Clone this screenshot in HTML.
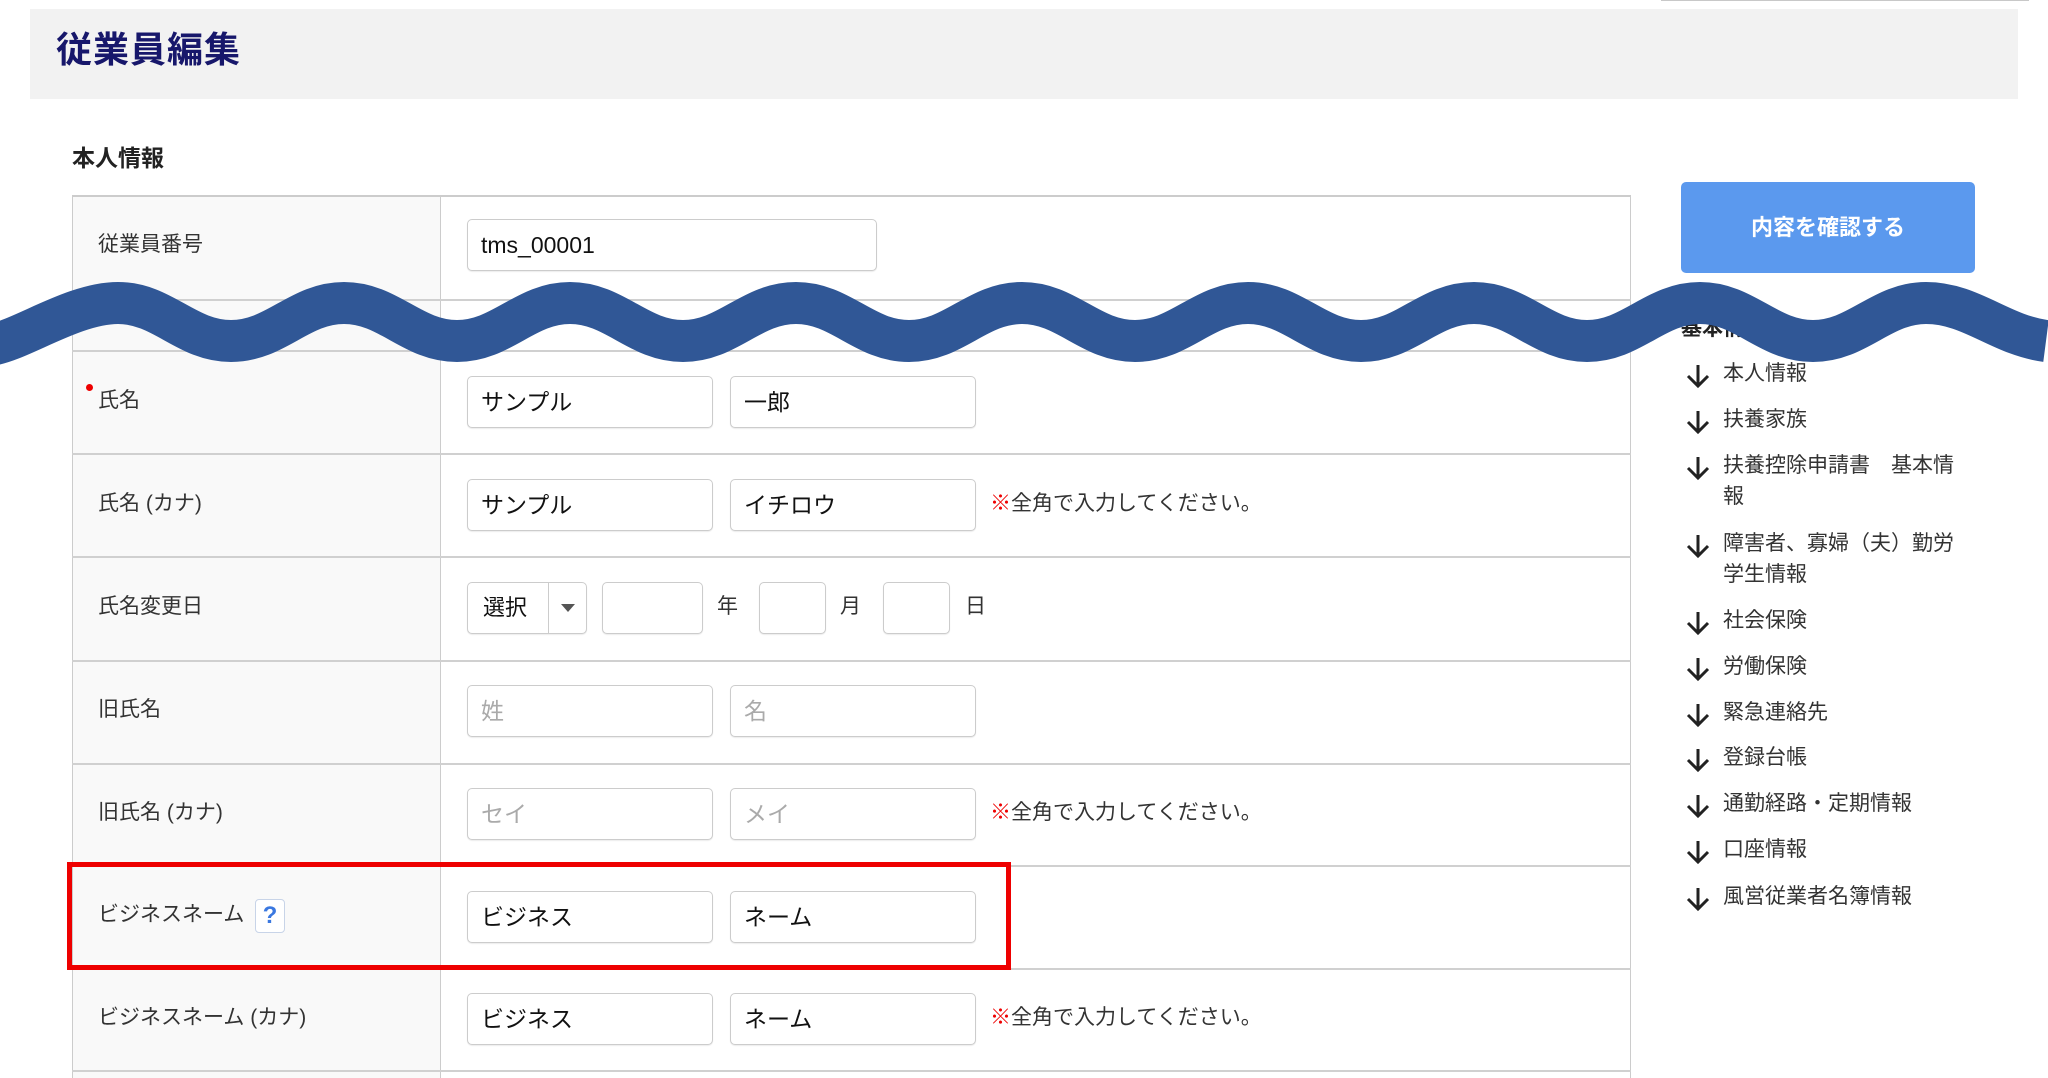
<!DOCTYPE html>
<html><head><meta charset="utf-8"><style>
*{margin:0;padding:0;box-sizing:border-box}
body{width:2048px;height:1078px;overflow:hidden;background:#fff;position:relative;font-family:"Liberation Sans","Noto Sans CJK JP",sans-serif;color:#333}
.a{position:absolute}
.hdr{left:30px;top:9px;width:1988px;height:90px;background:#f2f2f2}
.title{left:56px;top:26px;font-size:36px;font-weight:bold;color:#17176b;line-height:48px;letter-spacing:1px}
.sec{left:72px;top:143px;font-size:23px;font-weight:bold;color:#222;line-height:30px}
.tbl{left:72px;top:195px;width:1559px;height:883px;border-left:1px solid #ccc;border-right:1px solid #ccc;border-top:2px solid #ccc}
.lbl{left:73px;width:368px;background:#f9f9f9;border-right:1px solid #ccc}
.hl{left:72px;width:1559px;height:0;border-top:2px solid #d0d0d0}
.lt{left:98px;font-size:21px;color:#333;line-height:30px}
.in{height:52px;border:1px solid #ccc;border-radius:5px;background:#fff;font-size:23px;color:#111;line-height:50px;padding-left:13px;box-shadow:0 1px 1px rgba(0,0,0,.08)}
.ph{color:#aaa}
.note{font-size:21px;color:#333;line-height:30px}
.note b{color:#e00;font-weight:normal}
.btn{left:1681px;top:182px;width:294px;height:91px;background:#5b99ee;border-radius:5px;color:#fff;font-size:22px;font-weight:bold;text-align:center;line-height:91px}
.nav{left:1697px;font-size:21px;color:#333;line-height:31px}
.nav svg{position:absolute;left:-12px;top:5px}
.nav span{display:block;margin-left:26px;width:240px}
</style></head><body>
<div class="a" style="left:1661px;top:0;width:368px;height:1px;background:#c8c8c8"></div>
<div class="a hdr"></div>
<div class="a title">従業員編集</div>
<div class="a sec">本人情報</div>

<div class="a tbl"></div>
<div class="a lbl" style="top:197px;height:881px"></div>
<div class="a hl" style="top:299px"></div>
<div class="a hl" style="top:350px"></div>
<div class="a hl" style="top:453px"></div>
<div class="a hl" style="top:556px"></div>
<div class="a hl" style="top:660px"></div>
<div class="a hl" style="top:763px"></div>
<div class="a hl" style="top:865px"></div>
<div class="a hl" style="top:968px"></div>
<div class="a hl" style="top:1070px"></div>

<div class="a lt" style="top:230px">従業員番号</div>
<div class="a in" style="left:467px;top:219px;width:410px">tms_00001</div>
<div class="a" style="left:86px;top:384px;width:7px;height:7px;border-radius:50%;background:#e00"></div>
<div class="a lt" style="top:386px">氏名</div>
<div class="a in" style="left:467px;top:376px;width:246px">サンプル</div>
<div class="a in" style="left:730px;top:376px;width:246px">一郎</div>
<div class="a lt" style="top:489px">氏名 (カナ)</div>
<div class="a in" style="left:467px;top:479px;width:246px">サンプル</div>
<div class="a in" style="left:730px;top:479px;width:246px">イチロウ</div>
<div class="a note" style="left:990px;top:489px"><b>※</b>全角で入力してください。</div>
<div class="a lt" style="top:592px">氏名変更日</div>
<div class="a in" style="left:467px;top:582px;width:120px;padding-left:15px;font-size:22px">選択</div>
<div class="a" style="left:548px;top:583px;width:1px;height:50px;background:#ccc"></div>
<div class="a" style="left:561px;top:604px;width:0;height:0;border-left:7px solid transparent;border-right:7px solid transparent;border-top:8px solid #555"></div>
<div class="a in" style="left:602px;top:582px;width:101px"></div>
<div class="a note" style="left:717px;top:592px">年</div>
<div class="a in" style="left:759px;top:582px;width:67px"></div>
<div class="a note" style="left:840px;top:592px">月</div>
<div class="a in" style="left:883px;top:582px;width:67px"></div>
<div class="a note" style="left:965px;top:592px">日</div>
<div class="a lt" style="top:695px">旧氏名</div>
<div class="a in ph" style="left:467px;top:685px;width:246px">姓</div>
<div class="a in ph" style="left:730px;top:685px;width:246px">名</div>
<div class="a lt" style="top:798px">旧氏名 (カナ)</div>
<div class="a in ph" style="left:467px;top:788px;width:246px">セイ</div>
<div class="a in ph" style="left:730px;top:788px;width:246px">メイ</div>
<div class="a note" style="left:990px;top:798px"><b>※</b>全角で入力してください。</div>
<div class="a lt" style="top:900px">ビジネスネーム</div>
<div class="a" style="left:255px;top:899px;width:30px;height:34px;border:1px solid #c8d4e8;border-radius:4px;background:#fff;color:#3a78e0;font-size:24px;text-align:center;line-height:32px;font-weight:bold">?</div>
<div class="a in" style="left:467px;top:891px;width:246px">ビジネス</div>
<div class="a in" style="left:730px;top:891px;width:246px">ネーム</div>
<div class="a lt" style="top:1003px">ビジネスネーム (カナ)</div>
<div class="a in" style="left:467px;top:993px;width:246px">ビジネス</div>
<div class="a in" style="left:730px;top:993px;width:246px">ネーム</div>
<div class="a note" style="left:990px;top:1003px"><b>※</b>全角で入力してください。</div>

<div class="a" style="left:67px;top:862px;width:944px;height:108px;border:5px solid #e00"></div>

<div class="a btn">内容を確認する</div>
<div class="a" style="left:1681px;top:314px;font-size:21px;font-weight:bold;color:#222;line-height:30px">基本情報</div>
<div class="a nav" style="top:358px"><svg width="26" height="26" viewBox="0 0 26 26"><path d="M13 2V23M3 13l10 10 10-10" fill="none" stroke="#222" stroke-width="3"/></svg><span>本人情報</span></div>
<div class="a nav" style="top:404px"><svg width="26" height="26" viewBox="0 0 26 26"><path d="M13 2V23M3 13l10 10 10-10" fill="none" stroke="#222" stroke-width="3"/></svg><span>扶養家族</span></div>
<div class="a nav" style="top:450px"><svg width="26" height="26" viewBox="0 0 26 26"><path d="M13 2V23M3 13l10 10 10-10" fill="none" stroke="#222" stroke-width="3"/></svg><span>扶養控除申請書　基本情報</span></div>
<div class="a nav" style="top:528px"><svg width="26" height="26" viewBox="0 0 26 26"><path d="M13 2V23M3 13l10 10 10-10" fill="none" stroke="#222" stroke-width="3"/></svg><span>障害者、寡婦（夫）勤労学生情報</span></div>
<div class="a nav" style="top:605px"><svg width="26" height="26" viewBox="0 0 26 26"><path d="M13 2V23M3 13l10 10 10-10" fill="none" stroke="#222" stroke-width="3"/></svg><span>社会保険</span></div>
<div class="a nav" style="top:651px"><svg width="26" height="26" viewBox="0 0 26 26"><path d="M13 2V23M3 13l10 10 10-10" fill="none" stroke="#222" stroke-width="3"/></svg><span>労働保険</span></div>
<div class="a nav" style="top:697px"><svg width="26" height="26" viewBox="0 0 26 26"><path d="M13 2V23M3 13l10 10 10-10" fill="none" stroke="#222" stroke-width="3"/></svg><span>緊急連絡先</span></div>
<div class="a nav" style="top:742px"><svg width="26" height="26" viewBox="0 0 26 26"><path d="M13 2V23M3 13l10 10 10-10" fill="none" stroke="#222" stroke-width="3"/></svg><span>登録台帳</span></div>
<div class="a nav" style="top:788px"><svg width="26" height="26" viewBox="0 0 26 26"><path d="M13 2V23M3 13l10 10 10-10" fill="none" stroke="#222" stroke-width="3"/></svg><span>通勤経路・定期情報</span></div>
<div class="a nav" style="top:834px"><svg width="26" height="26" viewBox="0 0 26 26"><path d="M13 2V23M3 13l10 10 10-10" fill="none" stroke="#222" stroke-width="3"/></svg><span>口座情報</span></div>
<div class="a nav" style="top:881px"><svg width="26" height="26" viewBox="0 0 26 26"><path d="M13 2V23M3 13l10 10 10-10" fill="none" stroke="#222" stroke-width="3"/></svg><span>風営従業者名簿情報</span></div>

<svg class="a" style="left:0;top:0" width="2048" height="1078" viewBox="0 0 2048 1078">
<path d="M-10 345 C20 341 73 303 118 303 C163 303 186 341 231 341 C276 341 299 303 344 303 C389 303 412 341 457 341 C502 341 525 303 570 303 C615 303 638 341 683 341 C728 341 751 303 796 303 C841 303 864 341 909 341 C954 341 977 303 1022 303 C1067 303 1090 341 1135 341 C1180 341 1203 303 1248 303 C1293 303 1316 341 1361 341 C1406 341 1429 303 1474 303 C1519 303 1542 341 1587 341 C1632 341 1655 303 1700 303 C1745 303 1768 341 1813 341 C1858 341 1881 303 1926 303 C1971 303 2000 335 2046 341" fill="none" stroke="#305796" stroke-width="42"/>
</svg>
</body></html>
